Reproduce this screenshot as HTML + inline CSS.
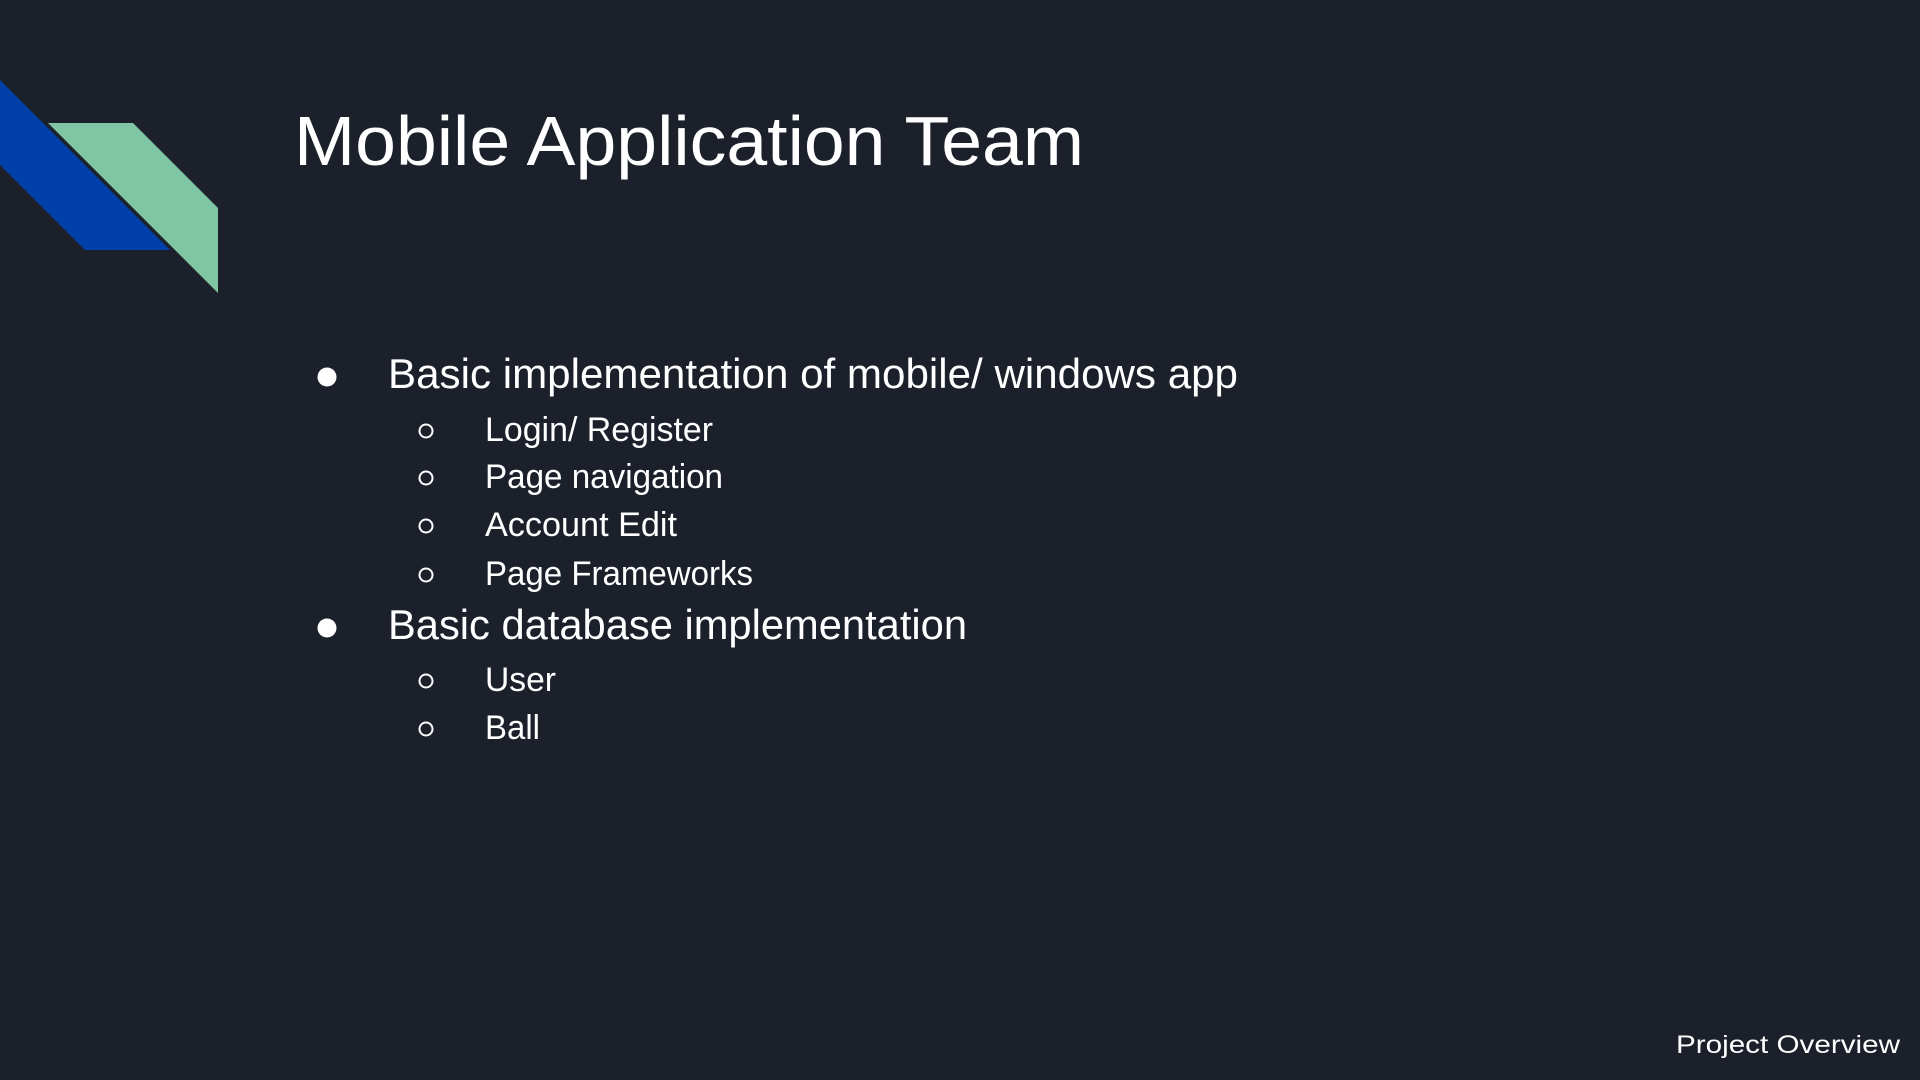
<!DOCTYPE html>
<html><head><meta charset="utf-8"><style>html,body{margin:0;padding:0;background:#1b202b;}svg{display:block}</style></head>
<body>
<svg width="1920" height="1080" viewBox="0 0 1920 1080" xmlns="http://www.w3.org/2000/svg">
<rect width="1920" height="1080" fill="#1b202b"/>
<polygon points="0,80 170,250 85,250 0,165" fill="#0040a8"/>
<polygon points="48,123 133,123 218,208 218,293" fill="#80c6a4"/>
<g fill="#ffffff" font-family="Liberation Sans, sans-serif">
<text x="294" y="165" font-size="70" textLength="790" lengthAdjust="spacingAndGlyphs">Mobile Application Team</text>
<text x="388" y="388" font-size="42" textLength="850" lengthAdjust="spacingAndGlyphs">Basic implementation of mobile/ windows app</text>
<text x="485" y="441" font-size="34" textLength="228" lengthAdjust="spacingAndGlyphs">Login/ Register</text>
<text x="485" y="488" font-size="34" textLength="238" lengthAdjust="spacingAndGlyphs">Page navigation</text>
<text x="485" y="536" font-size="34" textLength="192" lengthAdjust="spacingAndGlyphs">Account Edit</text>
<text x="485" y="585" font-size="34" textLength="268" lengthAdjust="spacingAndGlyphs">Page Frameworks</text>
<text x="388" y="639" font-size="42" textLength="579" lengthAdjust="spacingAndGlyphs">Basic database implementation</text>
<text x="485" y="691" font-size="34" textLength="71" lengthAdjust="spacingAndGlyphs">User</text>
<text x="485" y="739" font-size="34" textLength="55" lengthAdjust="spacingAndGlyphs">Ball</text>
<text x="1676" y="1053" font-size="25" textLength="224" lengthAdjust="spacingAndGlyphs">Project Overview</text>
<circle cx="327" cy="377" r="9.5"/>
<circle cx="327" cy="628" r="9.5"/>
</g>
<g fill="none" stroke="#ffffff" stroke-width="2">
<circle cx="426" cy="431" r="6.5"/>
<circle cx="426" cy="478" r="6.5"/>
<circle cx="426" cy="526" r="6.5"/>
<circle cx="426" cy="575" r="6.5"/>
<circle cx="426" cy="681" r="6.5"/>
<circle cx="426" cy="729" r="6.5"/>
</g>
</svg>
</body></html>
